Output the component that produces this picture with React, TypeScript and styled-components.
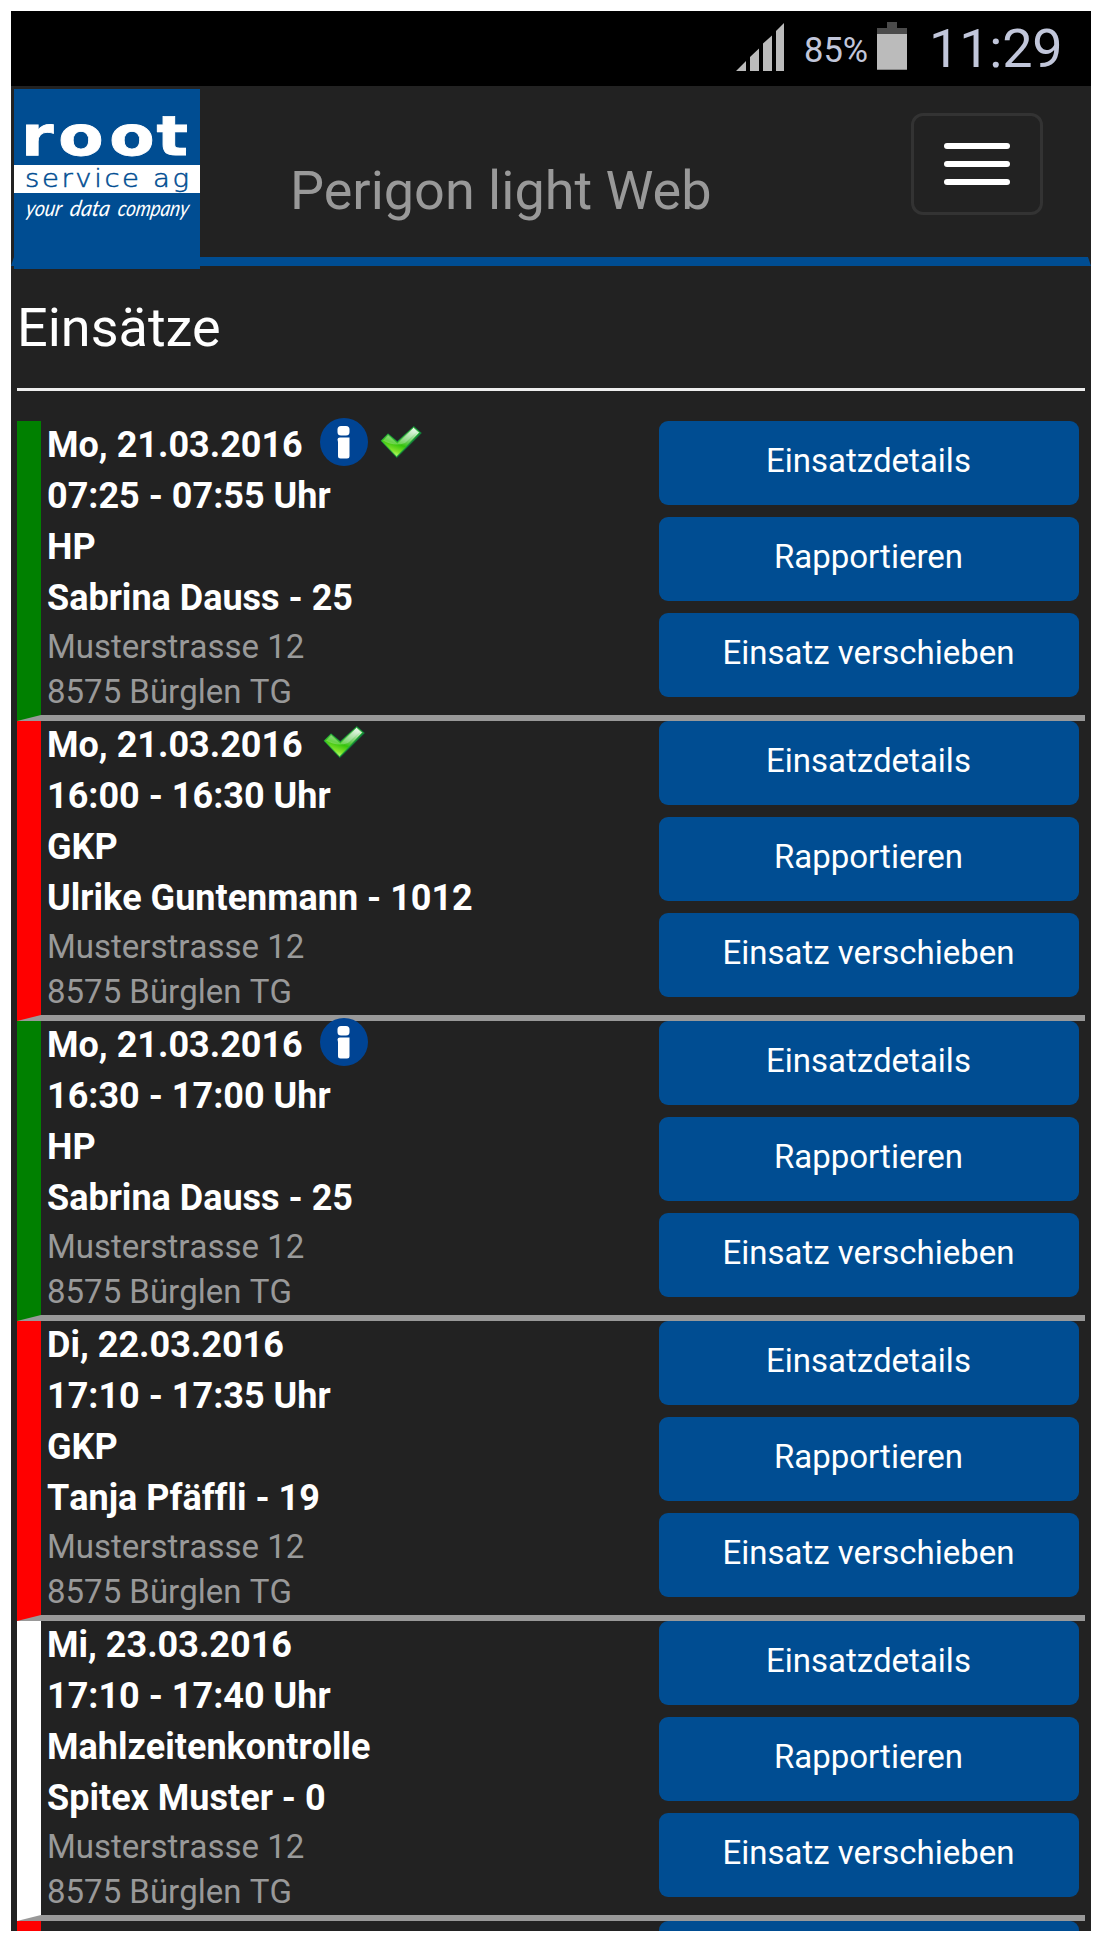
import React from 'react';
import styled, { createGlobalStyle } from 'styled-components';

const GlobalStyle = createGlobalStyle`
  * { box-sizing: border-box; }
  html, body { margin: 0; padding: 0; background: #fff; }
  body { font-family: Roboto, "Liberation Sans", sans-serif; }
`;

const Page = styled.div`
  padding: 11px 12px 12px 11px;
  height: 1943px;
  overflow: hidden;
`;

const Phone = styled.div`
  width: 1080px;
  height: 1920px;
  overflow: hidden;
  background: #222;
  display: flex;
  flex-direction: column;
`;

const StatusBar = styled.div`
  height: 75px;
  flex: none;
  background: #000;
  color: #c1c6da;
  display: flex;
  align-items: flex-start;
  justify-content: flex-end;
  padding-right: 31px;
`;

const Signal = styled.svg`
  width: 48px;
  height: 48px;
  margin: 12px 20px 0 0;
  flex: none;
`;

const Percent = styled.span`
  width: 65px;
  font-size: 34.5px;
  line-height: 40px;
  padding-top: 19px;
  margin-right: 8px;
  white-space: nowrap;
`;

const Battery = styled.svg`
  width: 30px;
  height: 48px;
  margin: 11px 22px 0 0;
  flex: none;
`;

const Clock = styled.span`
  width: 131px;
  font-size: 54px;
  line-height: 62px;
  padding-top: 7px;
  letter-spacing: -0.2px;
  white-space: nowrap;
`;

const Header = styled.header`
  height: 180px;
  flex: none;
  display: flex;
  align-items: flex-start;
  border: 3px solid transparent;
  border-bottom: 9px solid #004d92;
`;

const Logo = styled.svg`
  width: 186px;
  height: 180px;
  flex: none;
  display: block;
`;

const AppTitle = styled.div`
  margin: 69px 0 0 90px;
  flex: 1;
  font-size: 54px;
  line-height: 66px;
  color: #999;
  white-space: nowrap;
`;

const MenuButton = styled.button`
  width: 132px;
  height: 102px;
  margin: 24px 45px 0 0;
  padding: 0;
  border: 3px solid #333;
  border-radius: 12px;
  background: transparent;
  display: flex;
  flex-direction: column;
  align-items: center;
  justify-content: center;
  gap: 12px;
`;

const MenuBar = styled.span`
  width: 66px;
  height: 6px;
  border-radius: 3px;
  background: #fff;
`;

const Heading = styled.h1`
  margin: 29px 6px 0;
  height: 96px;
  flex: none;
  border-bottom: 3px solid #eee;
  font-size: 54px;
  font-weight: 400;
  line-height: 66px;
  color: #fff;
`;

const List = styled.div`
  margin: 30px 6px 0;
  flex: none;
`;

const Entry = styled.article<{ $status: string }>`
  height: 300px;
  border-left: 24px solid ${p => p.$status};
  border-bottom: 6px solid #999;
  padding: 0 6px;
  display: flex;
  justify-content: space-between;
`;

const Info = styled.div`
  display: flex;
  flex-direction: column;
  color: #fff;
  font-size: 36px;
  font-weight: 700;
  line-height: 51px;
  white-space: nowrap;
  font-variant-ligatures: none;
  font-kerning: none;
  margin-top: -1px;
`;

const Line = styled.div`
  height: 51px;
  display: flex;
`;

const DateText = styled.span`
  width: 273px;
`;

const Address = styled.div`
  height: 45px;
  font-size: 33px;
  font-weight: 400;
  line-height: 45px;
  color: #999;
`;

const StatusIcon = styled.svg`
  width: 48px;
  height: 48px;
  margin: -2px 9px 0 0;
  flex: none;
`;

const Actions = styled.div`
  width: 420px;
  display: flex;
  flex-direction: column;
  gap: 12px;
`;

const Action = styled.button`
  height: 84px;
  flex: none;
  border: 0;
  border-radius: 9px;
  background: #004d92;
  color: #fff;
  font: 400 33px/45px Roboto, "Liberation Sans", sans-serif;
  padding: 0 1px 6px 0;
`;

const InfoIcon = () => (
  <StatusIcon viewBox="0 0 48 48">
    <circle cx="24" cy="24" r="24" fill="#004494" />
    <rect x="17.5" y="8" width="12" height="9.5" rx="3.5" fill="#fff" />
    <path d="M17.5 21.5Q17.5 19.5 20 19.5H29.5V38Q29.5 40.5 27 40.5H20.5Q18 40.5 18 38V24Z" fill="#fff" />
  </StatusIcon>
);

const CheckIcon = () => (
  <StatusIcon viewBox="0 0 48 48">
    <defs>
      <linearGradient id="leaf" x1="0.8" y1="0" x2="0.35" y2="1">
        <stop offset="0" stopColor="#e9f8ec" />
        <stop offset="0.42" stopColor="#73cf68" />
        <stop offset="0.62" stopColor="#35c40c" />
        <stop offset="0.85" stopColor="#83e32c" />
        <stop offset="1" stopColor="#c2ff83" />
      </linearGradient>
    </defs>
    <path d="M3.6 22.7L11 15.2L20.3 23L36.8 8L44.8 15L19.8 40Z" fill="#12803a" />
    <path d="M4.6 22.7L11 16.4L20.3 24.4L36.6 9.4L42.4 14.6L19.6 38.4Z" fill="url(#leaf)" stroke="#3cc431" strokeWidth=".7" />
    <path d="M6 22.5L11.2 17.6L20.3 25.6L36.8 11L39.5 14L28 25Q17 29 6 22.5Z" fill="#fff" opacity=".25" />
  </StatusIcon>
);

const BrandLogo = () => (
  <Logo viewBox="0 0 186 180">
    <rect width="186" height="180" fill="#004d92" />
    <rect y="76" width="186" height="28" fill="#fff" />
    <text
      transform="translate(7 66) scale(1.2 1)"
      x="0 31 73.5 113"
      fill="#fff"
      stroke="#fff"
      strokeWidth=".8"
      fontFamily="DejaVu Sans"
      fontWeight="700"
      fontSize="55"
    >
      root
    </text>
    <text
      transform="translate(11 97.5) scale(1.1 1)"
      fill="#004d92"
      fontFamily="DejaVu Sans"
      fontWeight="200"
      fontSize="25"
      textLength="149"
      lengthAdjust="spacing"
      stroke="#004d92"
      strokeWidth=".5"
    >
      service ag
    </text>
    <g fill="#fff" fontFamily="Lato" fontStyle="italic" fontWeight="400" fontSize="22">
      <text transform="translate(11 127) skewX(-10)" textLength="36" lengthAdjust="spacingAndGlyphs">your</text>
      <text transform="translate(55 127) skewX(-10)" textLength="40" lengthAdjust="spacingAndGlyphs">data</text>
      <text transform="translate(103 127) skewX(-10)" textLength="71" lengthAdjust="spacingAndGlyphs">company</text>
    </g>
  </Logo>
);

type Visit = {
  status: string;
  date: string;
  time: string;
  service: string;
  client: string;
  info?: boolean;
  done?: boolean;
};

const visits: Visit[] = [
  { status: '#008000', date: 'Mo, 21.03.2016', time: '07:25 - 07:55 Uhr', service: 'HP', client: 'Sabrina Dauss - 25', info: true, done: true },
  { status: '#ff0000', date: 'Mo, 21.03.2016', time: '16:00 - 16:30 Uhr', service: 'GKP', client: 'Ulrike Guntenmann - 1012', done: true },
  { status: '#008000', date: 'Mo, 21.03.2016', time: '16:30 - 17:00 Uhr', service: 'HP', client: 'Sabrina Dauss - 25', info: true },
  { status: '#ff0000', date: 'Di, 22.03.2016', time: '17:10 - 17:35 Uhr', service: 'GKP', client: 'Tanja Pfäffli - 19' },
  { status: '#ffffff', date: 'Mi, 23.03.2016', time: '17:10 - 17:40 Uhr', service: 'Mahlzeitenkontrolle', client: 'Spitex Muster - 0' },
];

const NextEntry = styled.div`
  height: 10px;
  overflow: hidden;
  border-left: 24px solid #ff0000;
  padding-right: 6px;
  display: flex;
  justify-content: flex-end;
`;

const NextAction = styled.div`
  width: 420px;
  height: 84px;
  flex: none;
  border-radius: 9px;
  background: #004d92;
`;

export default function App() {
  return (
    <Page>
      <GlobalStyle />
      <Phone>
        <StatusBar>
          <Signal viewBox="0 0 48 48" fill="#bbb">
            <path d="M0 48L10 38V48ZM14 48V34L23 25.5V48ZM27 48V20.5L36 12.5V48ZM40 48V8L48 0V48Z" />
          </Signal>
          <Percent>85%</Percent>
          <Battery viewBox="0 0 30 48">
            <path d="M10 0H20V6H30V48H0V6H10Z" fill="#4b4b4b" />
            <rect y="12" width="30" height="35" fill="#bbb" />
            <rect y="47" width="30" height="1" fill="#888" />
          </Battery>
          <Clock>11:29</Clock>
        </StatusBar>
        <Header>
          <BrandLogo />
          <AppTitle>Perigon light Web</AppTitle>
          <MenuButton aria-label="Menu">
            <MenuBar />
            <MenuBar />
            <MenuBar />
          </MenuButton>
        </Header>
        <Heading>Einsätze</Heading>
        <List>
          {visits.map((v, i) => (
            <Entry key={i} $status={v.status}>
              <Info>
                <Line>
                  <DateText>{v.date}</DateText>
                  {v.info && <InfoIcon />}
                  {v.done && <CheckIcon />}
                </Line>
                <Line>{v.time}</Line>
                <Line>{v.service}</Line>
                <Line>{v.client}</Line>
                <Address>Musterstrasse 12</Address>
                <Address>8575 Bürglen TG</Address>
              </Info>
              <Actions>
                <Action>Einsatzdetails</Action>
                <Action>Rapportieren</Action>
                <Action>Einsatz verschieben</Action>
              </Actions>
            </Entry>
          ))}
          <NextEntry>
            <NextAction />
          </NextEntry>
        </List>
      </Phone>
    </Page>
  );
}
